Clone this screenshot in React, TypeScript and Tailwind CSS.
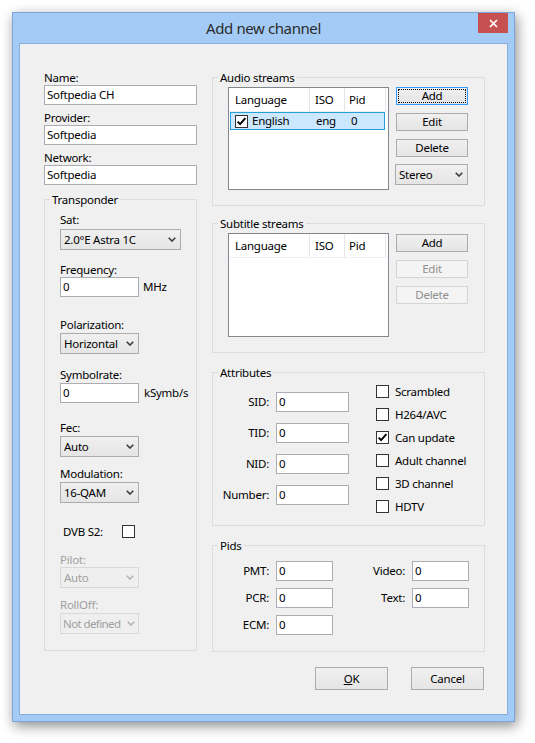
import type { ReactNode } from 'react';

type Kids = { children?: ReactNode; className?: string };

function Label({ children, className = '', disabled = false }: Kids & { disabled?: boolean }) {
  return (
    <div
      className={`h-[15px] whitespace-nowrap leading-[15px] ${
        disabled ? 'text-[#a0a0a0]' : 'text-black'
      } ${className}`}
    >
      {children}
    </div>
  );
}

function TextBox({ value, className = 'w-full' }: { value: string; className?: string }) {
  return (
    <div
      className={`h-[20px] shrink-0 whitespace-nowrap border border-[#abadb3] bg-white pl-[2px] leading-[18px] ${className}`}
    >
      {value}
    </div>
  );
}

function Chevron({ color }: { color: string }) {
  return (
    <svg width="8" height="5" viewBox="0 0 8 5" className="shrink-0">
      <path d="M0.7 0.7 L4 4 L7.3 0.7" fill="none" stroke={color} strokeWidth="1.6" />
    </svg>
  );
}

function Select({
  value,
  className = '',
  textClass = '',
  disabled = false,
}: {
  value: string;
  className?: string;
  textClass?: string;
  disabled?: boolean;
}) {
  return (
    <div
      className={`flex h-[21px] shrink-0 items-center border pl-[3px] pr-[4px] whitespace-nowrap ${
        disabled
          ? 'border-[#d9d9d9] bg-[#efefef] text-[#a0a0a0]'
          : 'border-[#acacac] bg-linear-to-b from-[#f0f0f0] to-[#e5e5e5] text-black'
      } ${className}`}
    >
      <span className={`min-w-0 flex-1 overflow-hidden ${textClass}`}>{value}</span>
      <Chevron color={disabled ? '#b5b5b5' : '#3c3c3c'} />
    </div>
  );
}

function CheckBox({ checked = false }: { checked?: boolean }) {
  return (
    <span className="flex h-[13px] w-[13px] shrink-0 items-center justify-center border border-[#333333] bg-white">
      {checked && (
        <svg width="11" height="11" viewBox="0 0 11 11">
          <path d="M1.6 5.6 L4.1 8.2 L9.4 2.2" fill="none" stroke="#000" strokeWidth="1.9" />
        </svg>
      )}
    </span>
  );
}

function Button({
  children,
  disabled = false,
  focused = false,
  className = '',
}: Kids & { disabled?: boolean; focused?: boolean }) {
  return (
    <div
      className={`relative flex shrink-0 items-center justify-center border ${
        disabled
          ? 'border-[#d5d5d5] bg-[#f4f4f4] text-[#8f8f8f]'
          : focused
          ? 'border-[#3399ff] bg-linear-to-b from-[#f0f0f0] to-[#e5e5e5] text-black'
          : 'border-[#acacac] bg-linear-to-b from-[#f0f0f0] to-[#e5e5e5] text-black'
      } ${className}`}
    >
      {focused && <span className="absolute inset-[1px] border border-dotted border-black" />}
      <span className="relative">{children}</span>
    </div>
  );
}

function Group({ title, className = '', children }: Kids & { title: string }) {
  return (
    <fieldset className={`border border-[#dcdcdc] ${className}`}>
      <legend className="ml-[5px] px-[2px] leading-[15px]">{title}</legend>
      {children}
    </fieldset>
  );
}

type Stream = { language: string; iso: string; pid: string; checked: boolean };

function StreamList({ height, rows }: { height: string; rows: Stream[] }) {
  return (
    <div className={`w-[161px] shrink-0 border border-[#828790] bg-white ${height}`}>
      <div className="flex h-[24px] border-b border-[#edf1f7] leading-[23px]">
        <div className="w-[81px] border-r border-[#e5e5e5] pl-[6px]">Language</div>
        <div className="w-[35px] border-r border-[#e5e5e5] pl-[5px]">ISO</div>
        <div className="w-[41px] border-r border-[#e5e5e5] pl-[4px]">Pid</div>
      </div>
      {rows.map((r) => (
        <div
          key={r.language}
          className="ml-[1px] flex h-[18px] w-[155px] items-center border border-[#26a0da] bg-[#cce8ff]"
        >
          <div className="flex w-[79px] items-center pl-[4px]">
            <CheckBox checked={r.checked} />
            <span className="ml-[4px]">{r.language}</span>
          </div>
          <div className="w-[35px] pl-[6px]">{r.iso}</div>
          <div className="pl-[6px]">{r.pid}</div>
        </div>
      ))}
    </div>
  );
}

const ATTRS = ['SID:', 'TID:', 'NID:', 'Number:'];
const FLAGS: [string, boolean][] = [
  ['Scrambled', false],
  ['H264/AVC', false],
  ['Can update', true],
  ['Adult channel', false],
  ['3D channel', false],
  ['HDTV', false],
];

function Transponder() {
  return (
    <Group title="Transponder" className="mt-[7px] h-[459px]">
      <div className="flex flex-col pl-[15px] pt-[5px]">
        <Label>Sat:</Label>
        <Select value="2.0°E Astra 1C" className="mt-[2px] w-[121px]" />

        <Label className="mt-[12px]">Frequency:</Label>
        <div className="flex items-center">
          <TextBox value="0" className="w-[79px]" />
          <span className="ml-[4px]">MHz</span>
        </div>

        <Label className="mt-[20px]">Polarization:</Label>
        <Select value="Horizontal" className="mt-[1px] w-[79px]" />

        <Label className="mt-[13px]">Symbolrate:</Label>
        <div className="mt-[1px] flex items-center">
          <TextBox value="0" className="w-[79px]" />
          <span className="ml-[5px]">kSymb/s</span>
        </div>

        <Label className="mt-[17px]">Fec:</Label>
        <Select value="Auto" className="mt-[1px] w-[79px]" />

        <Label className="mt-[9px]">Modulation:</Label>
        <Select value="16-QAM" className="mt-[1px] w-[79px]" />

        <div className="mt-[21px] flex h-[15px] items-center">
          <span className="ml-[3px] w-[59px]">DVB S2:</span>
          <CheckBox />
        </div>

        <Label className="mt-[13px]" disabled>
          Pilot:
        </Label>
        <Select value="Auto" className="w-[79px]" disabled />

        <Label className="mt-[9px]" disabled>
          RollOff:
        </Label>
        <Select
          value="Not defined"
          className="mt-[1px] w-[79px] !pl-[2px] !pr-[3px]"
          textClass="tracking-[-0.6px]"
          disabled
        />
      </div>
    </Group>
  );
}

function PidRow({ left, right }: { left: string; right?: string }) {
  return (
    <div className="flex h-[20px] items-center">
      <div className="flex w-[41px] justify-end whitespace-nowrap">{left}</div>
      <TextBox value="0" className="ml-[7px] w-[57px]" />
      {right && (
        <>
          <div className="flex w-[72px] justify-end whitespace-nowrap">{right}</div>
          <TextBox value="0" className="ml-[7px] w-[57px]" />
        </>
      )}
    </div>
  );
}

export default function App() {
  return (
    <div className="min-h-screen bg-white pl-[12px] pt-[12px] font-['Noto_Sans',sans-serif] text-[11.5px] tracking-[-0.25px] text-black">
      <div className="h-[710px] w-[503px] border border-[#7aa6da] bg-[#a3cbf6] shadow-[2px_4px_12px_rgba(0,0,0,0.45)]">
        {/* title bar */}
        <div className="relative h-[30px]">
          <div className="text-center text-[15px] leading-[30px] tracking-[-0.4px] text-[#2b2b2b]">
            Add new channel
          </div>
          <div className="absolute right-[6px] top-0 flex h-[20px] w-[30px] items-center justify-center bg-[#c75050]">
            <svg width="9" height="9" viewBox="0 0 9 9">
              <path d="M1 1 L8 8 M8 1 L1 8" stroke="#fff" strokeWidth="1.7" />
            </svg>
          </div>
        </div>

        {/* client area */}
        <div className="mx-[6px] flex h-[672px] flex-col border border-[#89aedb] bg-[#f0f0f0] pl-[24px] pt-[26px]">
          <div className="flex items-start">
            {/* left column */}
            <div className="flex w-[153px] shrink-0 flex-col">
              <Label>Name:</Label>
              <TextBox value="Softpedia CH" />
              <Label className="mt-[5px]">Provider:</Label>
              <TextBox value="Softpedia" />
              <Label className="mt-[5px]">Network:</Label>
              <TextBox value="Softpedia" />
              <Transponder />
            </div>

            {/* right column */}
            <div className="ml-[15px] flex w-[273px] shrink-0 flex-col">
              <Group title="Audio streams" className="h-[136px]">
                <div className="flex pl-[15px] pt-[2px]">
                  <StreamList
                    height="h-[103px]"
                    rows={[{ language: 'English', iso: 'eng', pid: '0', checked: true }]}
                  />
                  <div className="ml-[6px] flex w-[73px] flex-col">
                    <Button focused className="ml-[1px] h-[18px] w-[72px]">
                      Add
                    </Button>
                    <Button className="ml-[1px] mt-[8px] h-[18px] w-[72px]">Edit</Button>
                    <Button className="ml-[1px] mt-[8px] h-[18px] w-[72px]">Delete</Button>
                    <Select value="Stereo" className="mt-[7px] h-[20px] w-[73px]" />
                  </div>
                </div>
              </Group>

              <Group title="Subtitle streams" className="mt-[10px] h-[137px]">
                <div className="flex pl-[15px] pt-[2px]">
                  <StreamList height="h-[104px]" rows={[]} />
                  <div className="ml-[6px] flex w-[73px] flex-col pt-[1px]">
                    <Button className="ml-[1px] h-[18px] w-[72px]">Add</Button>
                    <Button disabled className="ml-[1px] mt-[8px] h-[18px] w-[72px]">
                      Edit
                    </Button>
                    <Button disabled className="ml-[1px] mt-[8px] h-[18px] w-[72px]">
                      Delete
                    </Button>
                  </div>
                </div>
              </Group>

              <Group title="Attributes" className="mt-[12px] h-[161px]">
                <div className="flex pl-[15px]">
                  <div className="flex flex-col gap-[11px] pt-[12px]">
                    {ATTRS.map((a) => (
                      <div key={a} className="flex h-[20px] items-center">
                        <div className="flex w-[41px] justify-end whitespace-nowrap">{a}</div>
                        <TextBox value="0" className="ml-[7px] w-[73px]" />
                      </div>
                    ))}
                  </div>
                  <div className="ml-[27px] flex flex-col">
                    {FLAGS.map(([name, on]) => (
                      <div key={name} className="flex h-[23px] items-center">
                        <CheckBox checked={on} />
                        <span className="ml-[6px] whitespace-nowrap">{name}</span>
                      </div>
                    ))}
                  </div>
                </div>
              </Group>

              <Group title="Pids" className="mt-[12px] h-[114px]">
                <div className="flex flex-col gap-[7px] pl-[15px] pt-[8px]">
                  <PidRow left="PMT:" right="Video:" />
                  <PidRow left="PCR:" right="Text:" />
                  <PidRow left="ECM:" />
                </div>
              </Group>
            </div>
          </div>

          {/* dialog buttons */}
          <div className="mt-[15px] flex justify-end gap-[23px] pr-[23px]">
            <Button className="h-[23px] w-[73px]">
              <u>O</u>K
            </Button>
            <Button className="h-[23px] w-[73px]">Cancel</Button>
          </div>
        </div>
      </div>
    </div>
  );
}
